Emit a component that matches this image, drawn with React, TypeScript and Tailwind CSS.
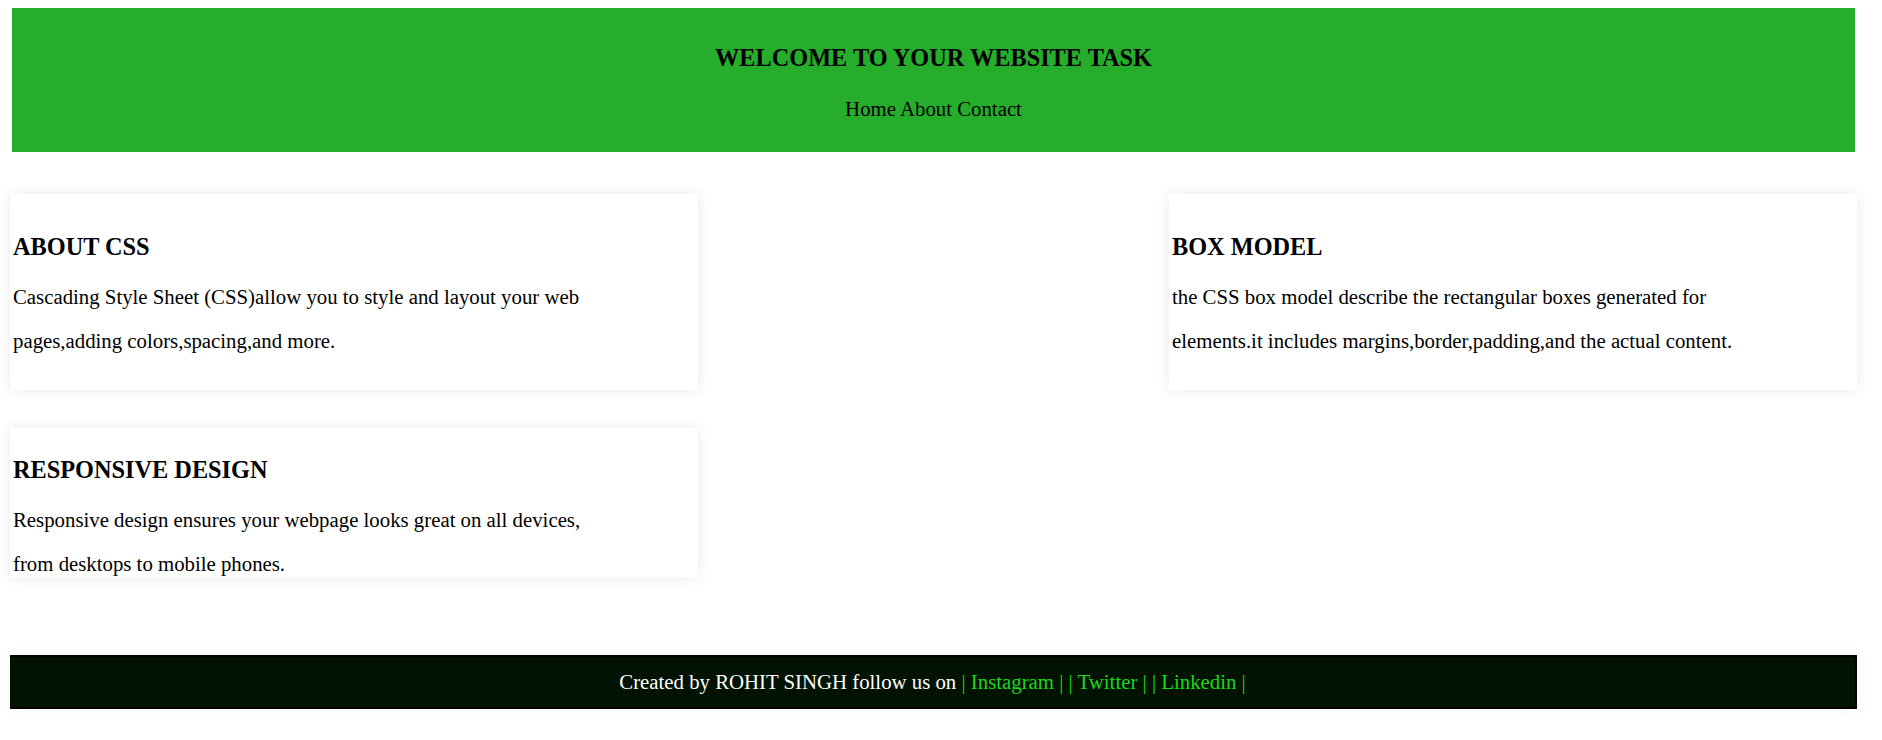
import React from 'react';

export default function App() {
  const cardText = "text-[20.8px] leading-[44px] whitespace-nowrap";

  return (
    <div className="min-h-screen bg-white font-['Liberation_Serif',serif] text-black">
      <div className="pt-[8px] pl-[10px] pr-[25px]">
        {/* Header */}
        <header className="mx-[2px] bg-[#25ad2b] pt-[36px] pb-[32px] text-center">
          <h1 className="text-[24.3px] leading-[28px] font-bold">WELCOME TO YOUR WEBSITE TASK</h1>
          <nav className="mt-[25px] text-[20.8px] leading-[23px]">
            <a href="#">Home</a> <a href="#">About</a> <a href="#">Contact</a>
          </nav>
        </header>

        {/* Cards */}
        <div className="mt-[42px] flex flex-wrap justify-between gap-y-[38px]">
          <section className="w-[688px] h-[196px] bg-white shadow-[0_0_12px_rgba(0,0,0,0.09)] pl-[3px] pt-[39px]">
            <h3 className="text-[24.3px] leading-[28px] font-bold">ABOUT CSS</h3>
            <p className={`mt-[14px] ${cardText}`}>
              Cascading Style Sheet (CSS)allow you to style and layout your web
              <br />
              pages,adding colors,spacing,and more.
            </p>
          </section>

          <section className="w-[688px] h-[196px] bg-white shadow-[0_0_12px_rgba(0,0,0,0.09)] pl-[3px] pt-[39px]">
            <h3 className="text-[24.3px] leading-[28px] font-bold">BOX MODEL</h3>
            <p className={`mt-[14px] ${cardText}`}>
              the CSS box model describe the rectangular boxes generated for
              <br />
              elements.it includes margins,border,padding,and the actual content.
            </p>
          </section>

          <section className="w-[688px] h-[150px] bg-white shadow-[0_0_12px_rgba(0,0,0,0.09)] pl-[3px] pt-[28px]">
            <h3 className="text-[24.3px] leading-[28px] font-bold">RESPONSIVE DESIGN</h3>
            <p className={`mt-[14px] ${cardText}`}>
              Responsive design ensures your webpage looks great on all devices,
              <br />
              from desktops to mobile phones.
            </p>
          </section>
        </div>

        {/* Footer */}
        <footer className="mt-[77px] h-[54px] flex items-center justify-center bg-[#021302] border-y-2 border-r-2 border-black shadow-[0_0_10px_rgba(200,215,240,0.25)] text-[20.8px] text-white">
          <span>
            Created by ROHIT SINGH follow us on{' '}
            <a href="#" className="text-[#17d917]">| Instagram |</a>{' '}
            <a href="#" className="text-[#17d917]">| Twitter |</a>{' '}
            <a href="#" className="text-[#17d917]">| Linkedin |</a>
          </span>
        </footer>
      </div>
    </div>
  );
}
